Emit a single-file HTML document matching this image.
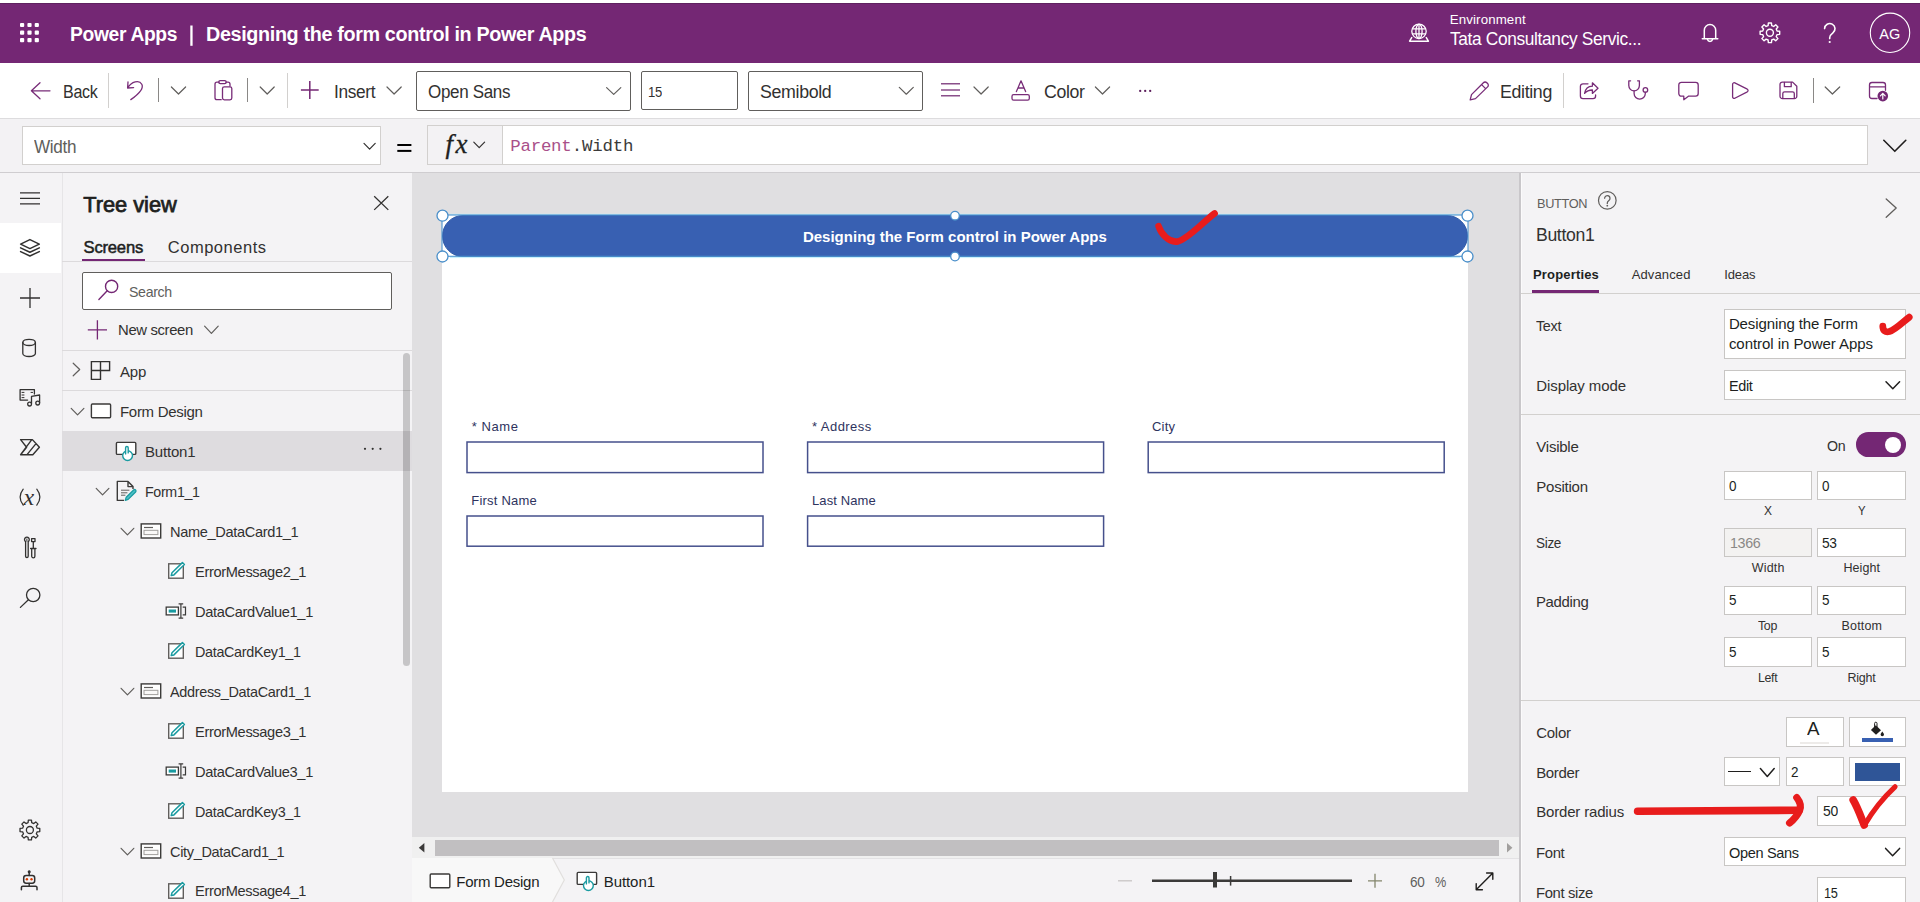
<!DOCTYPE html>
<html><head><meta charset="utf-8"><title>Power Apps</title>
<style>
*{box-sizing:border-box;margin:0;padding:0}
html,body{width:1920px;height:902px;overflow:hidden;background:#f4f3f5;font-family:"Liberation Sans",sans-serif;color:#323130}
.a{position:absolute}
.t{position:absolute;white-space:nowrap;line-height:1;transform-origin:0 0}
svg{position:absolute;overflow:visible}
.p{fill:none;stroke:#782c78;stroke-width:1.3;stroke-linecap:round;stroke-linejoin:round}
.g{fill:none;stroke:#3b3a39;stroke-width:1.3;stroke-linecap:round;stroke-linejoin:round}
.box{position:absolute;background:#fff;border:1px solid #c8c6c4}
</style></head><body>
<!-- top strip + header -->
<div class="a" style="left:0;top:0;width:1920px;height:3px;background:#fff"></div>
<div class="a" style="left:0;top:3px;width:1920px;height:60px;background:#742774;border-top:1px solid #5f2160"></div>
<!-- toolbar -->
<div class="a" style="left:0;top:63px;width:1920px;height:56px;background:#fff;border-bottom:1px solid #dddcde"></div>
<!-- formula bar -->
<div class="a" style="left:0;top:119px;width:1920px;height:54px;background:#f3f2f4;border-bottom:1px solid #cfcdd0"></div>
<!-- left rail -->
<div class="a" style="left:0;top:173px;width:62px;height:729px;background:#f4f3f5"></div>
<!-- tree panel -->
<div class="a" style="left:62px;top:173px;width:350px;height:729px;background:#f4f3f5;border-left:1px solid #e6e5e7"></div>
<!-- canvas -->
<div class="a" style="left:412px;top:173px;width:1108px;height:687px;background:#e0dfe1"></div>
<!-- right panel -->
<div class="a" style="left:1520px;top:173px;width:400px;height:729px;background:#f4f3f5;"></div>
<!-- ===== toolbar boxes ===== -->
<div class="a" style="left:108px;top:73px;width:1px;height:35px;background:#d2d0ce"></div>
<div class="a" style="left:158px;top:78px;width:1px;height:24px;background:#8a8886"></div>
<div class="a" style="left:247px;top:78px;width:1px;height:24px;background:#8a8886"></div>
<div class="a" style="left:287px;top:73px;width:1px;height:35px;background:#d2d0ce"></div>
<div class="a" style="left:416px;top:71px;width:215px;height:39.5px;background:#fff;border:1px solid #605e5c;border-radius:2px"></div>
<div class="a" style="left:641px;top:71px;width:97px;height:39px;background:#fff;border:1px solid #605e5c;border-radius:2px"></div>
<div class="a" style="left:748px;top:71px;width:175px;height:39.5px;background:#fff;border:1px solid #605e5c;border-radius:2px"></div>
<div class="a" style="left:1563px;top:73px;width:1px;height:35px;background:#d2d0ce"></div>
<div class="a" style="left:1813px;top:78px;width:1px;height:25px;background:#8a8886"></div>
<!-- ===== formula bar ===== -->
<div class="a" style="left:22px;top:126px;width:359px;height:39px;background:#fff;border:1px solid #d2d0ce"></div>
<div class="a" style="left:427px;top:125px;width:1441px;height:39.5px;background:#fff;border:1px solid #d2d0ce"></div>
<div class="a" style="left:428px;top:126px;width:75px;height:37.5px;background:#f3f2f4;border-right:1px solid #d2d0ce"></div>
<!-- ===== left rail ===== -->
<div class="a" style="left:0;top:223px;width:61px;height:49.5px;background:#fff"></div>
<!-- ===== tree panel ===== -->
<div class="a" style="left:82px;top:258.5px;width:63px;height:2.5px;background:#742774"></div>
<div class="a" style="left:62px;top:261px;width:350px;height:1px;background:#dcdadc"></div>
<div class="a" style="left:82px;top:272px;width:310px;height:38px;background:#fff;border:1px solid #605e5c;border-radius:2px"></div>
<div class="a" style="left:62px;top:350px;width:350px;height:1px;background:#dcdadc"></div>
<div class="a" style="left:62px;top:390px;width:350px;height:1px;background:#dcdadc"></div>
<div class="a" style="left:62px;top:431px;width:350px;height:39.5px;background:#dedcdf"></div>
<div class="a" style="left:402.5px;top:353px;width:7.5px;height:312.5px;background:rgba(0,0,0,0.19);border-radius:4px"></div>
<!-- ===== canvas ===== -->
<div class="a" style="left:442px;top:215px;width:1026px;height:577px;background:#fff"></div>
<div class="a" style="left:442px;top:215px;width:1026px;height:41.5px;background:#3860b2;border:1px solid #2f5aa8;border-radius:21px"></div>
<svg style="left:0;top:0" width="1920" height="902">
 <path d="M450,214.3H1460M450,257.6H1460" stroke="#c4eefb" stroke-width="1" fill="none"/>
 <rect x="442" y="215" width="1026" height="41.3" fill="none" stroke="#4b93cf" stroke-width="1.1"/>
 <g fill="#fff" stroke="#4a8fca" stroke-width="1.3">
  <circle cx="442.5" cy="215.7" r="5.5"/><circle cx="955" cy="215.7" r="4.3"/><circle cx="1467.5" cy="215.7" r="5.5"/>
  <circle cx="442.5" cy="256.5" r="5.5"/><circle cx="955" cy="256.5" r="4.3"/><circle cx="1467.5" cy="256.5" r="5.5"/>
 </g>
 <g fill="#fff" stroke="#46508c" stroke-width="1.5">
  <rect x="467" y="442" width="296" height="30.6"/>
  <rect x="807.6" y="442" width="296" height="30.6"/>
  <rect x="1148.2" y="442" width="296" height="30.6"/>
  <rect x="467" y="516" width="296" height="30.2"/>
  <rect x="807.6" y="516" width="296" height="30.2"/>
 </g>
</svg>
<!-- scrollbar + footer -->
<div class="a" style="left:412px;top:837px;width:1108px;height:20.5px;background:#f0f0f0"></div>
<div class="a" style="left:435px;top:839.5px;width:1064px;height:16px;background:#c1bfc1"></div>
<div class="a" style="left:412px;top:857.5px;width:1108px;height:44.5px;background:#f4f3f5;border-top:1px solid #e3e2e4"></div>
<div class="a" style="left:1518.8px;top:173px;width:2px;height:729px;background:#c9c7ca"></div><div class="a" style="left:1520.8px;top:173px;width:1px;height:729px;background:#fbfafb"></div>
<!-- ===== right panel ===== -->
<div class="a" style="left:1532px;top:290.2px;width:67px;height:3px;background:#742774"></div>
<div class="a" style="left:1521px;top:293px;width:399px;height:1px;background:#d2d0ce"></div>
<div class="a" style="left:1521px;top:414px;width:399px;height:1px;background:#d2d0ce"></div>
<div class="a" style="left:1521px;top:700px;width:399px;height:1px;background:#d2d0ce"></div>
<div class="box" style="left:1724px;top:309px;width:182px;height:49.5px"></div>
<div class="box" style="left:1724px;top:370px;width:182px;height:29.5px"></div>
<div class="a" style="left:1856px;top:432.2px;width:50px;height:24.6px;background:#742774;border-radius:12.3px"></div>
<div class="a" style="left:1885.3px;top:436.6px;width:16px;height:16px;background:#fff;border-radius:8px"></div>
<div class="box" style="left:1724px;top:470.5px;width:88px;height:29px"></div>
<div class="box" style="left:1817px;top:470.5px;width:89px;height:29px"></div>
<div class="box" style="left:1724px;top:527.5px;width:88px;height:29.2px;background:#f3f2f1"></div>
<div class="box" style="left:1817px;top:527.5px;width:89px;height:29.2px"></div>
<div class="box" style="left:1724px;top:585.5px;width:88px;height:29.2px"></div>
<div class="box" style="left:1817px;top:585.5px;width:89px;height:29.2px"></div>
<div class="box" style="left:1724px;top:637.4px;width:88px;height:29.3px"></div>
<div class="box" style="left:1817px;top:637.4px;width:89px;height:29.3px"></div>
<div class="box" style="left:1786px;top:717.2px;width:57.6px;height:29.4px"></div>
<div class="box" style="left:1849.2px;top:717.2px;width:56.8px;height:29.4px"></div>
<div class="a" style="left:1800px;top:741.5px;width:29px;height:2px;background:#edebe9"></div>
<div class="a" style="left:1862px;top:738px;width:31px;height:4px;background:#3860b2"></div>
<div class="box" style="left:1724.3px;top:757px;width:56.2px;height:29.4px"></div>
<div class="box" style="left:1786px;top:756.6px;width:57.6px;height:29.3px"></div>
<div class="box" style="left:1849.2px;top:757px;width:56.8px;height:29.4px"></div>
<div class="a" style="left:1854.8px;top:763px;width:45.2px;height:17.6px;background:#2f5597"></div>
<div class="a" style="left:1728.3px;top:771px;width:22.4px;height:1.3px;background:#201f1e"></div>
<div class="box" style="left:1817.2px;top:796.3px;width:88.8px;height:29.7px"></div>
<div class="box" style="left:1724.3px;top:837.3px;width:181.7px;height:29.1px"></div>
<div class="box" style="left:1817.2px;top:876.9px;width:88.8px;height:25.1px;border-bottom:none"></div>
<!-- ===== icons: header + toolbar ===== -->
<svg style="left:0;top:0" width="1920" height="902">
<!-- waffle -->
<g fill="#fff">
<rect x="20.0" y="22.9" width="4.2" height="4.2" rx="1"/><rect x="27.4" y="22.9" width="4.2" height="4.2" rx="1"/><rect x="34.7" y="22.9" width="4.2" height="4.2" rx="1"/><rect x="20.0" y="30.5" width="4.2" height="4.2" rx="1"/><rect x="27.4" y="30.5" width="4.2" height="4.2" rx="1"/><rect x="34.7" y="30.5" width="4.2" height="4.2" rx="1"/><rect x="20.0" y="38.0" width="4.2" height="4.2" rx="1"/><rect x="27.4" y="38.0" width="4.2" height="4.2" rx="1"/><rect x="34.7" y="38.0" width="4.2" height="4.2" rx="1"/>
</g>
<rect x="190.3" y="25.5" width="2.3" height="20.3" fill="#fff"/>
<!-- environment globe -->
<g fill="none" stroke="#fff" stroke-width="1.3">
<circle cx="1419" cy="31.3" r="7.2"/><ellipse cx="1419" cy="31.3" rx="3.1" ry="7.2"/>
<path d="M1412.3,28.8H1425.7M1412.3,33.8H1425.7M1419,24.1V38.5"/>
<path d="M1412,37.2L1409.6,41.2H1428.4L1426,37.2" stroke-width="1.5" stroke-linejoin="round"/>
</g>
<!-- bell -->
<g fill="none" stroke="#fff" stroke-width="1.5" stroke-linejoin="round" stroke-linecap="round">
<path d="M1704.3,38.6V30.2a5.7,5.7 0 0 1 11.4,0V38.6M1702.3,38.8H1717.8"/>
<path d="M1707.5,39.5a2.6,2.6 0 0 0 5,0"/>
</g>
<!-- gear -->
<path d="M1777.08,31.00 L1779.68,31.25 L1779.68,34.35 L1777.08,34.60 L1776.25,36.60 L1777.91,38.62 L1775.72,40.81 L1773.70,39.15 L1771.70,39.98 L1771.45,42.58 L1768.35,42.58 L1768.10,39.98 L1766.10,39.15 L1764.08,40.81 L1761.89,38.62 L1763.55,36.60 L1762.72,34.60 L1760.12,34.35 L1760.12,31.25 L1762.72,31.00 L1763.55,29.00 L1761.89,26.98 L1764.08,24.79 L1766.10,26.45 L1768.10,25.62 L1768.35,23.02 L1771.45,23.02 L1771.70,25.62 L1773.70,26.45 L1775.72,24.79 L1777.91,26.98 L1776.25,29.00Z" fill="none" stroke="#fff" stroke-width="1.4" stroke-linejoin="round"/>
<circle cx="1769.9" cy="32.8" r="3.5" fill="none" stroke="#fff" stroke-width="1.4"/>
<!-- question -->
<path d="M1824.6,28.6a5.2,5.2 0 1 1 8.3,4.3c-2,1.5 -3.2,2.6 -3.2,4.9v0.8" fill="none" stroke="#fff" stroke-width="1.6" stroke-linecap="round"/>
<circle cx="1829.7" cy="42" r="1.1" fill="#fff"/>
<circle cx="1890" cy="32.8" r="19.7" fill="none" stroke="#fff" stroke-width="1.1"/>

<!-- toolbar: back arrow -->
<path class="p" d="M50,90.8H31.6M40,82.8L31.4,90.8L40,98.7"/>
<!-- undo -->
<path class="p" d="M128,82L127.6,88L133.6,87.6M127.8,87.8C131.5,81.5 139.2,79.6 141.8,84.2C144.2,88.8 138.5,94.2 130.8,99.6"/>
<!-- chevrons (gray) -->
<g fill="none" stroke="#605e5c" stroke-width="1.2" stroke-linecap="round" stroke-linejoin="round">
<path d="M171.4,87L178.5,94L185.6,87"/>
<path d="M260.2,87L267.2,94L274.2,87"/>
<path d="M387,87L394.1,94L401.2,87"/>
<path d="M606.6,87.6L613.7,94.4L620.8,87.6"/>
<path d="M899.3,87.4L906.3,94.2L913.3,87.4"/>
<path d="M974,87L981.1,94L988.2,87"/>
<path d="M1095.4,87L1102.5,94L1109.6,87"/>
<path d="M1825.2,87L1832.4,94L1839.7,87"/>
</g>
<!-- paste -->
<g class="p">
<path d="M221.2,99.7H217a2,2 0 0 1 -2,-2V84.2a2,2 0 0 1 2,-2H219M226,82.2H228a2,2 0 0 1 2,2V86"/>
<rect x="218.8" y="80.6" width="7.4" height="3.1" rx="1.4"/>
<rect x="222.5" y="86.8" width="9.3" height="13" rx="1.8"/>
</g>
<!-- plus -->
<path d="M300.9,90H318.7M309.8,81.1V98.9" fill="none" stroke="#742774" stroke-width="1.5"/>
<!-- align -->
<path d="M941,83.7H960M941,89.9H960M941,95.8H960" fill="none" stroke="#8a4f8a" stroke-width="1.5"/>
<!-- color A -->
<g class="p" stroke-width="1.5">
<path d="M1016.4,91.6L1021,80.8L1025.6,91.6M1018,88H1024"/>
<rect x="1012" y="94.6" width="17.3" height="5.6" rx="1.6"/>
</g>
<g fill="#5c1f5c"><circle cx="1140.2" cy="90.9" r="1.15"/><circle cx="1145.2" cy="90.9" r="1.15"/><circle cx="1150.2" cy="90.9" r="1.15"/></g>
<!-- pencil -->
<path class="p" d="M1470.2,99.8L1471.5,94.6L1483.4,82.7a2.4,2.4 0 0 1 3.4,0l0.8,0.8a2.4,2.4 0 0 1 0,3.4L1475.5,98.6ZM1481.6,84.6L1485.6,88.6"/>
<!-- share -->
<path class="p" d="M1588,83.8H1583a2.6,2.6 0 0 0 -2.6,2.6V96a2.6,2.6 0 0 0 2.6,2.6H1593a2.6,2.6 0 0 0 2.6,-2.6V95"/>
<path class="p" d="M1584.6,93.4C1585.4,88.6 1588.4,86.4 1592.4,86.2V82.8L1598,88.2L1592.4,93.4V90C1589,90 1586.6,91 1584.6,93.4Z"/>
<!-- stethoscope -->
<g class="p" stroke-width="1.5">
<path d="M1630.6,80.8H1628.8V85.6a5.3,5.3 0 0 0 10.6,0V80.8H1637.6"/>
<path d="M1634.1,91V93.6a5.6,5.6 0 0 0 11.2,0V92.3"/>
<circle cx="1645.4" cy="89.9" r="2.3"/>
</g>
<!-- comment -->
<path class="p" d="M1681.4,82.3H1695.6a2.6,2.6 0 0 1 2.6,2.6V93.6a2.6,2.6 0 0 1 -2.6,2.6H1688.4L1683.8,99.7V96.2H1681.4a2.6,2.6 0 0 1 -2.6,-2.6V84.9a2.6,2.6 0 0 1 2.6,-2.6Z"/>
<!-- play -->
<path class="p" d="M1732.6,84.2V96.9a1.5,1.5 0 0 0 2.2,1.3L1747.3,91.8a1.5,1.5 0 0 0 0,-2.6L1734.8,82.9a1.5,1.5 0 0 0 -2.2,1.3Z"/>
<!-- save -->
<g class="p">
<path d="M1782.4,82.1H1792.6L1796.8,86.3V96.2a2.4,2.4 0 0 1 -2.4,2.4H1782.4a2.4,2.4 0 0 1 -2.4,-2.4V84.5a2.4,2.4 0 0 1 2.4,-2.4Z"/>
<path d="M1784.4,82.3V86.7H1791.2V82.3M1782.8,98.4V93.6a1.8,1.8 0 0 1 1.8,-1.8H1792.5a1.8,1.8 0 0 1 1.8,1.8V98.4"/>
</g>
<!-- publish -->
<g class="p">
<path d="M1877,98.5H1872a2.5,2.5 0 0 1 -2.5,-2.5V85a2.5,2.5 0 0 1 2.5,-2.5H1883a2.5,2.5 0 0 1 2.5,2.5V90.3M1869.6,86.8H1885.4"/>
</g>
<circle cx="1882.8" cy="96.1" r="5.3" fill="#742774"/>
<path d="M1882.8,99V93.6M1880.4,95.8L1882.8,93.4L1885.2,95.8" fill="none" stroke="#fff" stroke-width="1.2" stroke-linecap="round" stroke-linejoin="round"/>

<!-- formula bar -->
<path d="M364,143.4L369.6,149.1L375.2,143.4" fill="none" stroke="#323130" stroke-width="1.2" stroke-linecap="round" stroke-linejoin="round"/>
<rect x="397.3" y="144" width="14.1" height="2" fill="#000"/><rect x="397.3" y="149.9" width="14.1" height="2" fill="#000"/>
<path d="M473.8,142.2L479.2,147.7L484.6,142.2" fill="none" stroke="#323130" stroke-width="1.2" stroke-linecap="round" stroke-linejoin="round"/>
<path d="M1883.8,140.3L1894.8,151.3L1905.8,140.3" fill="none" stroke="#201f1e" stroke-width="1.6" stroke-linecap="round" stroke-linejoin="round"/>
</svg>
<span class="t" style="left:445.6px;top:130.6px;font-size:27px;font-family:'Liberation Serif';font-style:italic;color:#201f1e;letter-spacing:2.5px;-webkit-text-stroke:0.3px #201f1e">fx</span>
<!-- ===== icons: left rail + tree ===== -->
<svg style="left:0;top:0" width="1920" height="902">
<g fill="none" stroke="#323130" stroke-width="1.3" stroke-linecap="round" stroke-linejoin="round">
<path d="M20,192.8H40M20,198.4H40M20,203.8H40" stroke-linecap="butt" stroke-width="1.2"/>
<!-- layers -->
<path d="M29.9,239.6L39.3,244.1L29.9,248.6L20.6,244.1Z" stroke-width="1.5"/>
<path d="M20.6,247.9L29.9,252.3L39.3,247.9M20.6,251.6L29.9,256L39.3,251.6" stroke-width="1.5"/>
<!-- plus -->
<path d="M20,298H40M30,288V308" stroke-linecap="butt" stroke-width="1.3"/>
<!-- cylinder -->
<ellipse cx="29.1" cy="342.4" rx="6.3" ry="3.1"/>
<path d="M22.8,342.4V353.4a6.3,3.1 0 0 0 12.6,0V342.4"/>
<!-- media -->
<path d="M27.6,400.1H20.1V389.7H34.4V394"/>
<path d="M22,392.4H24M22,395H24M22,397.6H24M31,392.4H32.6" stroke-width="1"/>
<path d="M31.5,403.6V396.4L39.6,395V402.6"/>
<circle cx="29.6" cy="404.1" r="1.9"/><circle cx="37.7" cy="403.1" r="1.9"/>
<!-- flow -->
<path d="M20.6,439.6H32.4L39.4,447.2L32.8,454.8H20.6L26.6,447.2ZM31.6,439.8L20.8,454.4M36,443.6L27,454.6" stroke-width="1.4"/>
<!-- (x) parens -->
<path d="M23.2,489.2Q17,497.2 23.2,505.2M36.8,489.2Q43,497.2 36.8,505.2" stroke-width="1.2"/>
<!-- tools -->
<path d="M25.6,541.6a2.4,2.4 0 1 1 2.6,0V556.2a1.3,1.3 0 0 1 -2.6,0Z"/>
<path d="M26.9,538.9V541.2" stroke-width="1"/>
<rect x="31.6" y="538.6" width="3.4" height="3"/>
<path d="M33.3,541.6V548.4M30.6,548.5H36M31.7,548.7V556.2a1.6,1.6 0 0 0 3.2,0V548.7"/>
<!-- search -->
<circle cx="33.2" cy="595" r="6.7"/><path d="M28.4,599.8L20.4,607.4"/>
<!-- gear -->
<path d="M37.18,828.18 L39.78,828.44 L39.78,831.56 L37.18,831.82 L36.33,833.86 L37.99,835.88 L35.78,838.09 L33.76,836.43 L31.72,837.28 L31.46,839.88 L28.34,839.88 L28.08,837.28 L26.04,836.43 L24.02,838.09 L21.81,835.88 L23.47,833.86 L22.62,831.82 L20.02,831.56 L20.02,828.44 L22.62,828.18 L23.47,826.14 L21.81,824.12 L24.02,821.91 L26.04,823.57 L28.08,822.72 L28.34,820.12 L31.46,820.12 L31.72,822.72 L33.76,823.57 L35.78,821.91 L37.99,824.12 L36.33,826.14Z"/><circle cx="29.9" cy="830" r="3.5"/>
<!-- bot -->
<rect x="23.7" y="875.6" width="11" height="7.6" rx="2.4" stroke-width="1.5"/>
<path d="M29.2,875.4V872.4M21.4,889.8V887.6a1.4,1.4 0 0 1 1.4,-1.4H35.6a1.4,1.4 0 0 1 1.4,1.4V889.8M29.2,883.4V886" stroke-width="1.5"/>
<circle cx="29.2" cy="871.7" r="0.9" fill="#323130"/>
</g>
<circle cx="26.9" cy="879.3" r="1.2" fill="#d83b01"/><circle cx="31.5" cy="879.3" r="1.2" fill="#d83b01"/>

<!-- tree header -->
<path d="M374.2,196.3L388.3,209.9M388.3,196.3L374.2,209.9" fill="none" stroke="#323130" stroke-width="1.3"/>
<g fill="none" stroke="#742774" stroke-width="1.4" stroke-linecap="round">
<circle cx="111.6" cy="286.4" r="6.1"/><path d="M107.2,290.8L98.9,299.4"/>
<path d="M87.8,329.8H107M97.4,320.2V339.4" stroke-linecap="butt" stroke-width="1.3"/>
</g>
<g fill="none" stroke="#605e5c" stroke-width="1.2" stroke-linecap="round" stroke-linejoin="round">
<path d="M204.6,326.2L211.4,333.4L218.2,326.2"/>
<path d="M73.2,363.2L79.7,369.5L73.2,375.8"/>
<path d="M71.2,408.4L77.55,414.9L83.9,408.4"/>
<path d="M96.2,488.4L102.55,494.9L108.9,488.4"/>
<path d="M121.1,528.3L127.45,534.8L133.8,528.3"/>
<path d="M121.1,688.3L127.45,694.8L133.8,688.3"/>
<path d="M121.1,848.3L127.45,854.8L133.8,848.3"/>
</g>
<!-- app icon -->
<path d="M91.4,361.6H109.6V370.5H91.4ZM100.5,361.6V379.4H91.4V370.5" fill="none" stroke="#323130" stroke-width="1.4"/>
<!-- screen icon -->
<rect x="91.4" y="404" width="19.2" height="13.7" rx="1" fill="#fff" stroke="#3b3a39" stroke-width="1.4"/>
<rect x="116.4" y="442.4" width="19.4" height="12" rx="1" fill="#fff" stroke="#3b3a39" stroke-width="1.4"/><circle cx="127.6" cy="455.6" r="4.9" fill="#fff" stroke="#1a9ba1" stroke-width="1.4"/><path d="M125.6,453.9V447.8a1.3,1.3 0 0 1 2.6,0V452.9" fill="#fff" stroke="#1a9ba1" stroke-width="1.4" stroke-linecap="round"/>
<g fill="#323130"><circle cx="365" cy="448.8" r="1.1"/><circle cx="372.7" cy="448.8" r="1.1"/><circle cx="380.4" cy="448.8" r="1.1"/></g>
<!-- form icon -->
<path d="M124,500.4H117.3V481.4H128L133,486.6V489M128,481.6V486.6H132.8" fill="none" stroke="#3b3a39" stroke-width="1.4" stroke-linejoin="round"/>
<path d="M121,490.2H129.4M121,492.8H127.4M121,495.2H125.4" fill="none" stroke="#605e5c" stroke-width="1"/>
<path d="M125.2,500.4L126.2,497.2L133.6,490a1.4,1.4 0 0 1 2,2L128.2,499.4Z" fill="#4cc0c6" stroke="#1a9ba1" stroke-width="1.2" stroke-linejoin="round"/>
<rect x="141.2" y="523.9" width="19.5" height="14.1" fill="#fff" stroke="#3b3a39" stroke-width="1.4"/><path d="M144,527.5H153" stroke="#605e5c" stroke-width="1.2" fill="none"/><rect x="144" y="530.3" width="13.9" height="4.3" fill="#faf9f8" stroke="#a19f9d" stroke-width="1"/><rect x="141.2" y="683.9" width="19.5" height="14.1" fill="#fff" stroke="#3b3a39" stroke-width="1.4"/><path d="M144,687.5H153" stroke="#605e5c" stroke-width="1.2" fill="none"/><rect x="144" y="690.3" width="13.9" height="4.3" fill="#faf9f8" stroke="#a19f9d" stroke-width="1"/><rect x="141.2" y="843.9" width="19.5" height="14.1" fill="#fff" stroke="#3b3a39" stroke-width="1.4"/><path d="M144,847.5H153" stroke="#605e5c" stroke-width="1.2" fill="none"/><rect x="144" y="850.3" width="13.9" height="4.3" fill="#faf9f8" stroke="#a19f9d" stroke-width="1"/>
<rect x="168.7" y="563.8" width="14.6" height="14.4" fill="#fff" stroke="#605e5c" stroke-width="1.4"/><path d="M171.2,575.6L172,572.8L182.4,562.6L184.4,564.5L173.9,574.9Z" fill="#fff" stroke="#1a9ba1" stroke-width="1.5" stroke-linejoin="round"/><rect x="168.7" y="643.8" width="14.6" height="14.4" fill="#fff" stroke="#605e5c" stroke-width="1.4"/><path d="M171.2,655.6L172,652.8L182.4,642.6L184.4,644.5L173.9,654.9Z" fill="#fff" stroke="#1a9ba1" stroke-width="1.5" stroke-linejoin="round"/><rect x="168.7" y="723.8" width="14.6" height="14.4" fill="#fff" stroke="#605e5c" stroke-width="1.4"/><path d="M171.2,735.6L172,732.8L182.4,722.6L184.4,724.5L173.9,734.9Z" fill="#fff" stroke="#1a9ba1" stroke-width="1.5" stroke-linejoin="round"/><rect x="168.7" y="803.8" width="14.6" height="14.4" fill="#fff" stroke="#605e5c" stroke-width="1.4"/><path d="M171.2,815.6L172,812.8L182.4,802.6L184.4,804.5L173.9,814.9Z" fill="#fff" stroke="#1a9ba1" stroke-width="1.5" stroke-linejoin="round"/><rect x="168.7" y="883.8" width="14.6" height="14.4" fill="#fff" stroke="#605e5c" stroke-width="1.4"/><path d="M171.2,895.6L172,892.8L182.4,882.6L184.4,884.5L173.9,894.9Z" fill="#fff" stroke="#1a9ba1" stroke-width="1.5" stroke-linejoin="round"/>
<rect x="166.2" y="607.1" width="12.2" height="7.8" fill="#fff" stroke="#3b3a39" stroke-width="1.3"/><rect x="168.7" y="609.5" width="7.3" height="3.1" fill="#1a9ba1"/><path d="M178.6,603.9H183.2M178.6,618.1H183.2M180.9,603.9V618.1" stroke="#3b3a39" stroke-width="1.2" fill="none"/><path d="M182.7,607.1H185.5V614.9H182.7" stroke="#3b3a39" stroke-width="1.2" fill="none"/><rect x="166.2" y="767.1" width="12.2" height="7.8" fill="#fff" stroke="#3b3a39" stroke-width="1.3"/><rect x="168.7" y="769.5" width="7.3" height="3.1" fill="#1a9ba1"/><path d="M178.6,763.9H183.2M178.6,778.1H183.2M180.9,763.9V778.1" stroke="#3b3a39" stroke-width="1.2" fill="none"/><path d="M182.7,767.1H185.5V774.9H182.7" stroke="#3b3a39" stroke-width="1.2" fill="none"/>
</svg>
<span class="t" style="left:23.6px;top:484.5px;font-size:24px;font-family:'Liberation Serif';font-style:italic;color:#323130">x</span>
<!-- ===== icons: canvas, footer, right panel, annotations ===== -->
<svg style="left:0;top:0" width="1920" height="902">
<!-- scrollbar arrows -->
<path d="M424.4,843L418.8,847.8L424.4,852.6Z" fill="#3b3a39"/>
<path d="M1507,843L1512.4,847.8L1507,852.6Z" fill="#a19f9d"/>
<!-- breadcrumb -->
<path d="M412,858H552.5L564.3,880L552.5,902H412Z" fill="#f8f8f8"/>
<path d="M552.5,858L564.3,880L552.5,902" fill="none" stroke="#e1dfdd" stroke-width="1.2"/>
<rect x="430.2" y="874" width="19.6" height="13.8" rx="1" fill="#fff" stroke="#3b3a39" stroke-width="1.4"/>
<rect x="577.2" y="872.4" width="19.4" height="12" rx="1" fill="#fff" stroke="#3b3a39" stroke-width="1.4"/><circle cx="588.4" cy="885.6" r="4.9" fill="#fff" stroke="#1a9ba1" stroke-width="1.4"/><path d="M586.4,883.9V877.8a1.3,1.3 0 0 1 2.6,0V882.9" fill="#fff" stroke="#1a9ba1" stroke-width="1.4" stroke-linecap="round"/>
<!-- zoom controls -->
<path d="M1118,880.8H1132" stroke="#c8c6c4" stroke-width="1.3" fill="none"/>
<path d="M1152,880.8H1352" stroke="#3b3a39" stroke-width="2.6" fill="none"/>
<rect x="1213" y="872" width="4" height="15.5" fill="#3b3a39"/>
<path d="M1230.6,876V885.6" stroke="#3b3a39" stroke-width="1.5" fill="none"/>
<path d="M1368,880.8H1382M1375,873.8V887.8" stroke="#84866c" stroke-width="1.3" fill="none"/>
<path d="M1476.4,889.6L1492.6,873.2M1476.2,883.6V889.8H1482.4M1486.6,873H1492.8V879.2" fill="none" stroke="#201f1e" stroke-width="1.4" stroke-linecap="round" stroke-linejoin="round"/>

<!-- right panel -->
<circle cx="1607.3" cy="200.4" r="8.8" fill="none" stroke="#605e5c" stroke-width="1.2"/>
<path d="M1604.6,198.2a2.7,2.7 0 1 1 4.3,2.3c-1,0.8 -1.6,1.3 -1.6,2.5v0.4" fill="none" stroke="#605e5c" stroke-width="1.3" stroke-linecap="round"/>
<circle cx="1607.3" cy="205.7" r="0.9" fill="#605e5c"/>
<path d="M1886.2,199L1896.2,208.1L1886.2,217.2" fill="none" stroke="#605e5c" stroke-width="1.3" stroke-linecap="round" stroke-linejoin="round"/>
<g fill="none" stroke="#201f1e" stroke-width="1.5" stroke-linecap="round" stroke-linejoin="round">
<path d="M1886,381.8L1892.8,388.8L1899.6,381.8"/>
<path d="M1760.4,768.6L1767.3,776.4L1774.2,768.6"/>
<path d="M1885.6,848.4L1892.6,855.8L1899.6,848.4"/>
</g>
<!-- fill bucket -->
<path d="M1875.8,725.2L1881,730.2L1876,734.7L1870.9,730Z" fill="#201f1e"/>
<path d="M1874.6,727V723.4a1.2,1.2 0 0 1 2.4,0V727" fill="none" stroke="#201f1e" stroke-width="1"/>
<path d="M1882.3,731.6c1,1.4 1.7,2.2 1.7,3a1.7,1.7 0 0 1 -3.4,0c0,-0.8 0.7,-1.6 1.7,-3Z" fill="#201f1e"/>

<!-- red annotations -->
<g fill="none" stroke="#e81c1c" stroke-linecap="round" stroke-linejoin="round">
<path d="M1158.6,226.2C1161,233.4 1168.6,243.2 1178,241.4C1187.6,239 1202.4,222.8 1214.6,213.4" stroke-width="6.6"/>
<path d="M1882.8,326.2C1882.8,330.4 1885.4,332.8 1889.4,331.6C1895.6,329.6 1903,322 1909.2,317.2" stroke-width="6.8"/>
<path d="M1637.6,811.3L1799,810.2" stroke-width="7.6"/>
<path d="M1796.8,797.6C1799.6,801.2 1801.4,806 1799.6,810.4C1797.4,815.2 1793.4,819.8 1789.6,823" stroke-width="7.2"/>
<path d="M1853.2,800C1857.4,807 1861,817 1864.2,825" stroke-width="7.6"/>
<path d="M1864.4,825.2C1872,812 1883,798 1895,786.8" stroke-width="5.2"/>
</g>
</svg>
<!-- texts -->
<span class="t" id="t0" style="left:70.00px;top:23.75px;font-size:20px;color:#fff;font-weight:bold;letter-spacing:-0.350px;transform:scaleX(0.9625);">Power Apps</span>
<span class="t" id="t1" style="left:205.75px;top:23.75px;font-size:20px;color:#fff;font-weight:bold;letter-spacing:-0.350px;transform:scaleX(0.9873);">Designing the form control in Power Apps</span>
<span class="t" id="t2" style="left:1449.75px;top:12.70px;font-size:13.3px;color:#fff;letter-spacing:0.119px;">Environment</span>
<span class="t" id="t3" style="left:1449.75px;top:30.90px;font-size:17.5px;color:#fff;letter-spacing:-0.350px;transform:scaleX(0.9893);">Tata Consultancy Servic...</span>
<span class="t" id="t4" style="left:1879.30px;top:27.30px;font-size:14.5px;color:#fff;letter-spacing:0.047px;">AG</span>
<span class="t" id="t5" style="left:63.25px;top:83.00px;font-size:18px;color:#323130;letter-spacing:-0.350px;transform:scaleX(0.8915);">Back</span>
<span class="t" id="t6" style="left:334.25px;top:83.00px;font-size:18px;color:#323130;letter-spacing:-0.350px;transform:scaleX(0.9588);">Insert</span>
<span class="t" id="t7" style="left:427.50px;top:83.00px;font-size:18px;color:#323130;letter-spacing:-0.350px;transform:scaleX(0.9454);">Open Sans</span>
<span class="t" id="t8" style="left:647.50px;top:84.00px;font-size:15px;color:#323130;letter-spacing:-0.350px;transform:scaleX(0.8722);">15</span>
<span class="t" id="t9" style="left:760.00px;top:83.00px;font-size:18px;color:#323130;letter-spacing:-0.350px;transform:scaleX(0.9883);">Semibold</span>
<span class="t" id="t10" style="left:1044.00px;top:83.00px;font-size:18px;color:#323130;letter-spacing:-0.350px;transform:scaleX(0.9852);">Color</span>
<span class="t" id="t11" style="left:1499.70px;top:83.00px;font-size:18px;color:#323130;letter-spacing:-0.350px;transform:scaleX(0.9878);">Editing</span>
<span class="t" id="t12" style="left:33.75px;top:137.50px;font-size:18px;color:#605e5c;letter-spacing:-0.350px;transform:scaleX(0.9526);">Width</span>
<span class="t" id="t13" style="left:510.20px;top:137.70px;font-size:17.4px;color:#a9508a;font-family:'Liberation Mono';letter-spacing:-0.205px;">Parent</span>
<span class="t" id="t14" style="left:571.80px;top:137.70px;font-size:17.4px;color:#3b3a39;font-family:'Liberation Mono';letter-spacing:-0.205px;">.Width</span>
<span class="t" id="t15" style="left:83.25px;top:193.90px;font-size:21.8px;color:#201f1e;-webkit-text-stroke:0.75px #201f1e;letter-spacing:-0.021px;">Tree view</span>
<span class="t" id="t16" style="left:83.50px;top:239.50px;font-size:16.6px;color:#201f1e;-webkit-text-stroke:0.5px #201f1e;letter-spacing:-0.188px;">Screens</span>
<span class="t" id="t17" style="left:167.80px;top:238.50px;font-size:16.5px;color:#323130;letter-spacing:0.515px;">Components</span>
<span class="t" id="t18" style="left:128.60px;top:283.80px;font-size:15px;color:#605e5c;letter-spacing:-0.350px;transform:scaleX(0.9436);">Search</span>
<span class="t" id="t19" style="left:118.00px;top:322.00px;font-size:15px;color:#323130;letter-spacing:-0.350px;transform:scaleX(0.9901);">New screen</span>
<span class="t" id="t20" style="left:120.00px;top:364.00px;font-size:15px;color:#323130;letter-spacing:-0.202px;">App</span>
<span class="t" id="t21" style="left:120.00px;top:403.50px;font-size:15px;color:#323130;letter-spacing:-0.296px;">Form Design</span>
<span class="t" id="t22" style="left:145.00px;top:443.90px;font-size:15px;color:#323130;letter-spacing:-0.186px;">Button1</span>
<span class="t" id="t23" style="left:145.00px;top:483.80px;font-size:15px;color:#323130;letter-spacing:-0.350px;transform:scaleX(0.9494);">Form1_1</span>
<span class="t" id="t24" style="left:170.30px;top:523.70px;font-size:15px;color:#323130;letter-spacing:-0.350px;transform:scaleX(0.9726);">Name_DataCard1_1</span>
<span class="t" id="t25" style="left:195.00px;top:564.00px;font-size:15px;color:#323130;letter-spacing:-0.350px;transform:scaleX(0.9743);">ErrorMessage2_1</span>
<span class="t" id="t26" style="left:195.00px;top:604.00px;font-size:15px;color:#323130;letter-spacing:-0.350px;transform:scaleX(0.9758);">DataCardValue1_1</span>
<span class="t" id="t27" style="left:195.00px;top:643.90px;font-size:15px;color:#323130;letter-spacing:-0.350px;transform:scaleX(0.9590);">DataCardKey1_1</span>
<span class="t" id="t28" style="left:170.30px;top:683.80px;font-size:15px;color:#323130;letter-spacing:-0.350px;transform:scaleX(0.9652);">Address_DataCard1_1</span>
<span class="t" id="t29" style="left:195.00px;top:724.00px;font-size:15px;color:#323130;letter-spacing:-0.350px;transform:scaleX(0.9743);">ErrorMessage3_1</span>
<span class="t" id="t30" style="left:195.00px;top:764.00px;font-size:15px;color:#323130;letter-spacing:-0.350px;transform:scaleX(0.9758);">DataCardValue3_1</span>
<span class="t" id="t31" style="left:195.00px;top:803.90px;font-size:15px;color:#323130;letter-spacing:-0.350px;transform:scaleX(0.9590);">DataCardKey3_1</span>
<span class="t" id="t32" style="left:169.50px;top:843.70px;font-size:15px;color:#323130;letter-spacing:-0.350px;transform:scaleX(0.9691);">City_DataCard1_1</span>
<span class="t" id="t33" style="left:195.00px;top:883.00px;font-size:15px;color:#323130;letter-spacing:-0.350px;transform:scaleX(0.9735);">ErrorMessage4_1</span>
<span class="t" id="t34" style="left:802.90px;top:228.90px;font-size:15px;color:#fff;font-weight:bold;letter-spacing:0.009px;">Designing the Form control in Power Apps</span>
<span class="t" id="t35" style="left:471.75px;top:420.25px;font-size:13px;color:#2e335e;letter-spacing:0.578px;">* Name</span>
<span class="t" id="t36" style="left:812.00px;top:420.25px;font-size:13px;color:#2e335e;letter-spacing:0.449px;">* Address</span>
<span class="t" id="t37" style="left:1152.00px;top:420.25px;font-size:13px;color:#2e335e;letter-spacing:0.203px;">City</span>
<span class="t" id="t38" style="left:471.25px;top:494.00px;font-size:13px;color:#2e335e;letter-spacing:0.215px;">First Name</span>
<span class="t" id="t39" style="left:812.00px;top:494.00px;font-size:13px;color:#2e335e;letter-spacing:0.109px;">Last Name</span>
<span class="t" id="t40" style="left:456.25px;top:873.75px;font-size:15px;color:#201f1e;letter-spacing:-0.261px;">Form Design</span>
<span class="t" id="t41" style="left:603.75px;top:873.75px;font-size:15px;color:#201f1e;letter-spacing:-0.078px;">Button1</span>
<span class="t" id="t42" style="left:1409.50px;top:875.00px;font-size:14px;color:#605e5c;letter-spacing:-0.350px;transform:scaleX(0.9686);">60</span>
<span class="t" id="t43" style="left:1434.50px;top:875.00px;font-size:14px;color:#605e5c;transform:scaleX(0.9034);">%</span>
<span class="t" id="t44" style="left:1536.70px;top:197.00px;font-size:13.5px;color:#605e5c;letter-spacing:-0.350px;transform:scaleX(0.9455);">BUTTON</span>
<span class="t" id="t45" style="left:1535.60px;top:225.90px;font-size:18px;color:#323130;letter-spacing:-0.350px;transform:scaleX(0.9789);">Button1</span>
<span class="t" id="t46" style="left:1533.00px;top:267.50px;font-size:13px;color:#201f1e;font-weight:bold;letter-spacing:0.165px;">Properties</span>
<span class="t" id="t47" style="left:1631.70px;top:267.50px;font-size:13px;color:#323130;letter-spacing:0.125px;">Advanced</span>
<span class="t" id="t48" style="left:1724.20px;top:267.50px;font-size:13px;color:#323130;letter-spacing:-0.103px;">Ideas</span>
<span class="t" id="t49" style="left:1536.30px;top:317.60px;font-size:15px;color:#323130;letter-spacing:-0.350px;transform:scaleX(0.9597);">Text</span>
<span class="t" id="t50" style="left:1728.90px;top:316.00px;font-size:15px;color:#201f1e;letter-spacing:-0.106px;">Designing the Form</span>
<span class="t" id="t51" style="left:1728.90px;top:336.10px;font-size:15px;color:#201f1e;letter-spacing:-0.049px;">control in Power Apps</span>
<span class="t" id="t52" style="left:1536.30px;top:377.60px;font-size:15px;color:#323130;letter-spacing:-0.107px;">Display mode</span>
<span class="t" id="t53" style="left:1728.90px;top:377.60px;font-size:15px;color:#201f1e;letter-spacing:-0.350px;transform:scaleX(0.9633);">Edit</span>
<span class="t" id="t54" style="left:1536.30px;top:438.90px;font-size:15px;color:#323130;letter-spacing:-0.237px;">Visible</span>
<span class="t" id="t55" style="left:1826.70px;top:437.80px;font-size:15px;color:#323130;letter-spacing:-0.350px;transform:scaleX(0.9458);">On</span>
<span class="t" id="t56" style="left:1536.30px;top:479.00px;font-size:15px;color:#323130;letter-spacing:-0.239px;">Position</span>
<span class="t" id="t57" style="left:1728.50px;top:478.00px;font-size:15px;color:#201f1e;transform:scaleX(0.8989);">0</span>
<span class="t" id="t58" style="left:1822.00px;top:478.00px;font-size:15px;color:#201f1e;transform:scaleX(0.8989);">0</span>
<span class="t" id="t59" style="left:1764.00px;top:504.90px;font-size:12.5px;color:#323130;transform:scaleX(0.9588);">X</span>
<span class="t" id="t60" style="left:1857.90px;top:504.90px;font-size:12.5px;color:#323130;transform:scaleX(0.9109);">Y</span>
<span class="t" id="t61" style="left:1536.30px;top:535.20px;font-size:15px;color:#323130;letter-spacing:-0.350px;transform:scaleX(0.9027);">Size</span>
<span class="t" id="t62" style="left:1729.50px;top:534.80px;font-size:15px;color:#8a8886;letter-spacing:-0.350px;transform:scaleX(0.9528);">1366</span>
<span class="t" id="t63" style="left:1822.40px;top:534.80px;font-size:15px;color:#201f1e;letter-spacing:-0.350px;transform:scaleX(0.9181);">53</span>
<span class="t" id="t64" style="left:1751.70px;top:561.90px;font-size:12.5px;color:#323130;letter-spacing:0.187px;">Width</span>
<span class="t" id="t65" style="left:1843.50px;top:561.90px;font-size:12.5px;color:#323130;letter-spacing:0.072px;">Height</span>
<span class="t" id="t66" style="left:1536.30px;top:593.50px;font-size:15px;color:#323130;letter-spacing:-0.350px;transform:scaleX(0.9950);">Padding</span>
<span class="t" id="t67" style="left:1728.90px;top:592.40px;font-size:15px;color:#201f1e;transform:scaleX(0.8989);">5</span>
<span class="t" id="t68" style="left:1822.40px;top:592.40px;font-size:15px;color:#201f1e;transform:scaleX(0.8989);">5</span>
<span class="t" id="t69" style="left:1758.30px;top:620.00px;font-size:12.5px;color:#323130;letter-spacing:-0.350px;transform:scaleX(0.9920);">Top</span>
<span class="t" id="t70" style="left:1841.60px;top:620.00px;font-size:12.5px;color:#323130;letter-spacing:0.158px;">Bottom</span>
<span class="t" id="t71" style="left:1728.90px;top:644.20px;font-size:15px;color:#201f1e;transform:scaleX(0.8989);">5</span>
<span class="t" id="t72" style="left:1822.40px;top:644.20px;font-size:15px;color:#201f1e;transform:scaleX(0.8989);">5</span>
<span class="t" id="t73" style="left:1758.00px;top:671.90px;font-size:12.5px;color:#323130;letter-spacing:-0.350px;transform:scaleX(0.9894);">Left</span>
<span class="t" id="t74" style="left:1847.40px;top:671.90px;font-size:12.5px;color:#323130;letter-spacing:-0.197px;">Right</span>
<span class="t" id="t75" style="left:1536.20px;top:724.60px;font-size:15px;color:#323130;letter-spacing:-0.265px;">Color</span>
<span class="t" id="t76" style="left:1807.00px;top:720.40px;font-size:18px;color:#201f1e;transform:scaleX(1.0403);">A</span>
<span class="t" id="t77" style="left:1536.20px;top:764.70px;font-size:15px;color:#323130;letter-spacing:-0.350px;">Border</span>
<span class="t" id="t78" style="left:1791.00px;top:763.80px;font-size:15px;color:#201f1e;transform:scaleX(0.8989);">2</span>
<span class="t" id="t79" style="left:1536.20px;top:804.00px;font-size:15px;color:#323130;letter-spacing:-0.171px;">Border radius</span>
<span class="t" id="t80" style="left:1822.80px;top:803.40px;font-size:15px;color:#201f1e;letter-spacing:-0.350px;transform:scaleX(0.9304);">50</span>
<span class="t" id="t81" style="left:1536.20px;top:844.90px;font-size:15px;color:#323130;letter-spacing:-0.350px;transform:scaleX(0.9908);">Font</span>
<span class="t" id="t82" style="left:1728.80px;top:844.90px;font-size:15px;color:#201f1e;letter-spacing:-0.350px;transform:scaleX(0.9701);">Open Sans</span>
<span class="t" id="t83" style="left:1536.20px;top:884.50px;font-size:15px;color:#323130;letter-spacing:-0.350px;transform:scaleX(0.9869);">Font size</span>
<span class="t" id="t84" style="left:1823.50px;top:884.50px;font-size:15px;color:#201f1e;letter-spacing:-0.350px;transform:scaleX(0.8508);">15</span>
</body></html>
